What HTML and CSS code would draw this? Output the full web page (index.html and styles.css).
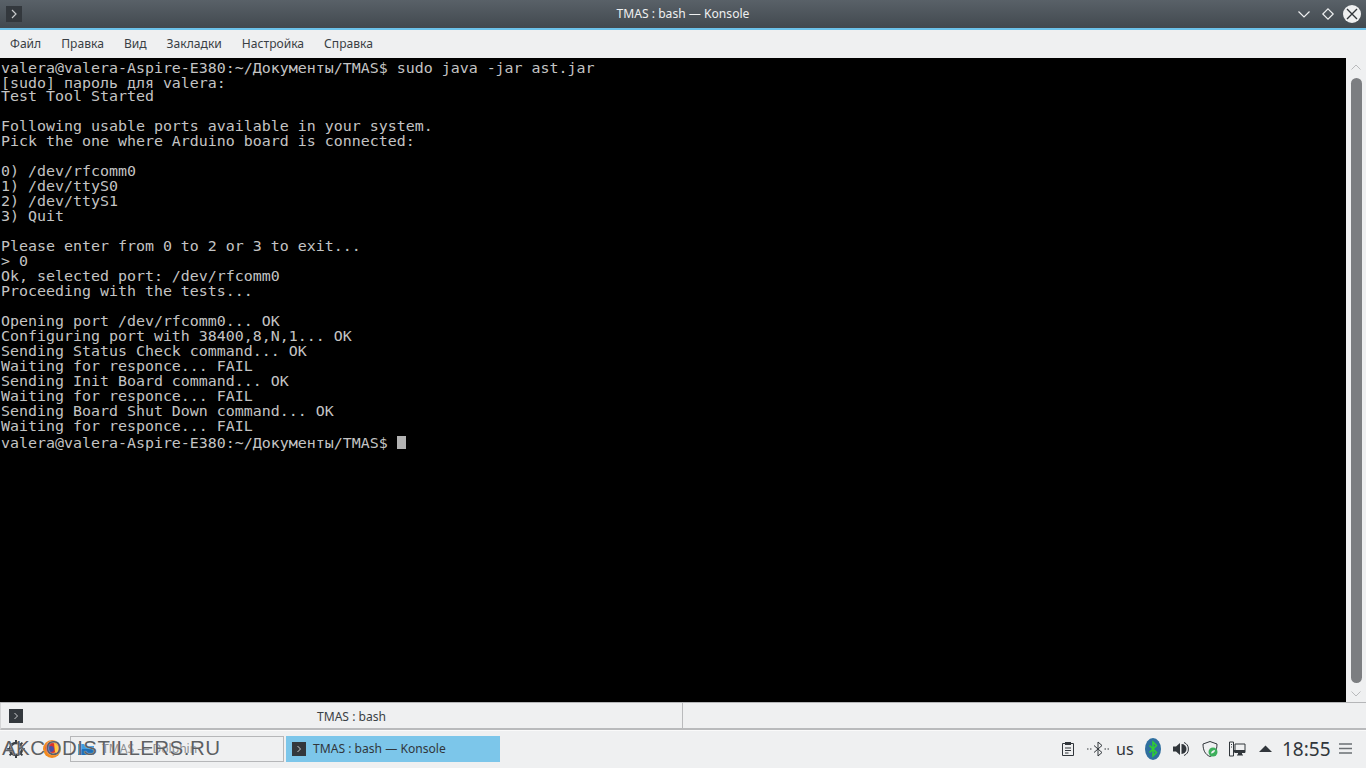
FILE: index.html
```html
<!DOCTYPE html>
<html lang="ru">
<head>
<meta charset="utf-8">
<title>TMAS : bash — Konsole</title>
<link rel="stylesheet" href="styles.css">
</head>
<body>
<div class="screen">
  <header class="titlebar">
    <div class="title-left"><span class="term-icon term-icon-title"><svg viewBox="0 0 16 16" width="16" height="16"><path d="M6 4l4 4-4 4" fill="none" stroke="#c8cacc" stroke-width="1.2"/></svg></span></div>
    <div class="title-text">TMAS : bash — Konsole</div>
    <div class="title-buttons">
      <svg class="wbtn" viewBox="0 0 14 14" width="14" height="14"><path d="M1.5 4.5L7 10l5.500-5.500" fill="none" stroke="#eff0f1" stroke-width="1.200"/></svg>
      <svg class="wbtn" viewBox="0 0 14 14" width="14" height="14"><path d="M7 1.800L12.200 7 7 12.200 1.800 7z" fill="none" stroke="#eff0f1" stroke-width="1.200"/></svg>
      <span class="close-btn"><svg viewBox="0 0 18 18" width="18" height="18"><path d="M4 4l10 10M14 4L4 14" fill="none" stroke="#31363b" stroke-width="1.400"/></svg></span>
    </div>
  </header>
  <nav class="menubar">
    <span class="menu-item">Файл</span>
    <span class="menu-item">Правка</span>
    <span class="menu-item">Вид</span>
    <span class="menu-item">Закладки</span>
    <span class="menu-item">Настройка</span>
    <span class="menu-item">Справка</span>
  </nav>
  <main class="workspace">
    <div class="terminal">
      <div class="line first">valera@valera-Aspire-E380:~/Документы/TMAS$ sudo java -jar ast.jar</div>
      <div class="line second">[sudo] пароль для valera:</div>
      <div class="line">Test Tool Started</div>
      <div class="line"> </div>
      <div class="line">Following usable ports available in your system.</div>
      <div class="line">Pick the one where Arduino board is connected:</div>
      <div class="line"> </div>
      <div class="line">0) /dev/rfcomm0</div>
      <div class="line">1) /dev/ttyS0</div>
      <div class="line">2) /dev/ttyS1</div>
      <div class="line">3) Quit</div>
      <div class="line"> </div>
      <div class="line">Please enter from 0 to 2 or 3 to exit...</div>
      <div class="line">&gt; 0</div>
      <div class="line">Ok, selected port: /dev/rfcomm0</div>
      <div class="line">Proceeding with the tests...</div>
      <div class="line"> </div>
      <div class="line">Opening port /dev/rfcomm0... OK</div>
      <div class="line">Configuring port with 38400,8,N,1... OK</div>
      <div class="line">Sending Status Check command... OK</div>
      <div class="line">Waiting for responce... FAIL</div>
      <div class="line">Sending Init Board command... OK</div>
      <div class="line">Waiting for responce... FAIL</div>
      <div class="line">Sending Board Shut Down command... OK</div>
      <div class="line">Waiting for responce... FAIL</div>
      <div class="line prompt">valera@valera-Aspire-E380:~/Документы/TMAS$ <span class="cursor"></span></div>
    </div>
    <aside class="scrollbar">
      <svg class="arrow" viewBox="0 0 10 6" width="10" height="6"><path d="M.5 5.500L5 1l4.500 4.500" fill="none" stroke="#b9babc" stroke-width="1"/></svg>
      <div class="thumb"></div>
      <svg class="arrow" viewBox="0 0 10 6" width="10" height="6"><path d="M.5.500L5 5l4.500-4.500" fill="none" stroke="#b9babc" stroke-width="1"/></svg>
    </aside>
  </main>
  <div class="tabbar">
    <div class="tab">
      <span class="term-icon term-icon-small"><svg viewBox="0 0 14 14" width="14" height="14"><path d="M5.500 4l3 3-3 3" fill="none" stroke="#c8cacc" stroke-width="1"/></svg></span>
      <span class="tab-label">TMAS : bash</span>
    </div>
  </div>
  <footer class="taskbar">
    <div class="launcher">
      <svg class="gear" viewBox="0 0 20 20" width="20" height="20"><circle cx="10" cy="10" r="6" fill="none" stroke="#3a3f44" stroke-width="2.500"/><path d="M10 1v4M10 15v4M1 10h4M15 10h4M3.600 3.600l3 3M13.400 13.400l3 3M16.400 3.600l-3 3M6.600 13.400l-3 3" stroke="#3a3f44" stroke-width="2"/></svg>
      <svg class="fox" viewBox="0 0 20 20" width="20" height="20"><circle cx="10" cy="10" r="9" fill="#f28a1e"/><circle cx="9" cy="9" r="5.500" fill="#d8342c"/><path d="M12 4a7 7 0 0 1 4 10l-3-1z" fill="#ffc93c"/><circle cx="9" cy="10" r="3" fill="#4a4fa5"/></svg>
    </div>
    <div class="task task-idle">
      <svg class="folder" viewBox="0 0 18 16" width="18" height="16"><path d="M1 3h6l2 2h8v9H1z" fill="#3d9be0"/><path d="M1 14l4-6h12v6z" fill="#1d6fb8"/></svg>
      <span class="task-label">TMAS — Dolphin</span>
    </div>
    <div class="task task-active">
      <span class="term-icon term-icon-small"><svg viewBox="0 0 14 14" width="14" height="14"><path d="M5.500 4l3 3-3 3" fill="none" stroke="#c8cacc" stroke-width="1"/></svg></span>
      <span class="task-label">TMAS : bash — Konsole</span>
    </div>
    <div class="tray">
      <svg class="tray-icon clip" viewBox="0 0 16 16" width="16" height="16"><path d="M2.500 2.500h11v12h-11z" fill="none" stroke="#31363b" stroke-width="1"/><path d="M5 1h6v3H5z" fill="#31363b"/><path d="M5 7h6M5 9.500h6M5 12h3.500" stroke="#31363b"/></svg>
      <svg class="tray-icon bt-dim" viewBox="0 0 24 16" width="24" height="16"><path d="M8 4.500l8 7L12 15V1l4 3.500-8 7" fill="none" stroke="#31363b"/><path d="M1 8h1.500M4 8h1.500M18.500 8H20M21.500 8H23" stroke="#31363b"/></svg>
      <span class="tray-us">us</span>
      <span class="bt-badge"><svg viewBox="0 0 12 18" width="12" height="18"><path d="M2.500 5.500l7 7L6 16V2l3.500 3.500-7 7" fill="none" stroke="#2fd12f" stroke-width="1.500"/></svg></span>
      <svg class="tray-icon speaker" viewBox="0 0 18 16" width="18" height="16"><path d="M1 5.500h3L8 2v12l-4-3.500H1z" fill="#31363b"/><path d="M9.500 3a5 5 0 0 1 0 10" fill="#31363b"/><path d="M12 1.500a7 7 0 0 1 0 13" fill="none" stroke="#31363b"/></svg>
      <svg class="tray-icon shield" viewBox="0 0 18 18" width="18" height="18"><path d="M9 1.500l7 2.500c0 6-2 10.500-7 12.500C4 14.500 2 10 2 4z" fill="none" stroke="#31363b"/><circle cx="12" cy="12" r="4.500" fill="#3daf5c"/><path d="M10 13.500c0-2 2-3.500 4-3.500 0 2-2 3.500-4 3.500" fill="#eff0f1"/></svg>
      <svg class="tray-icon net" viewBox="0 0 18 16" width="18" height="16"><path d="M1.500 1h4v14h-4zM7 3h10v8.500H7z" fill="none" stroke="#31363b"/><path d="M3 3.500h1M3 6h1M9 14h6" stroke="#31363b"/><path d="M10 11.500h4V14h-4zM5.500 11.500H17V9H5.500z" fill="#31363b"/></svg>
      <svg class="tray-icon up" viewBox="0 0 13 7" width="13" height="7"><path d="M0 7l6.500-6.500L13 7z" fill="#31363b"/></svg>
      <span class="clock">18:55</span>
      <svg class="tray-icon burger" viewBox="0 0 13 11" width="13" height="11"><path d="M0 1h13M0 5.500h13M0 10h13" stroke="#6b6f73" stroke-width="1.300"/></svg>
    </div>
    <div class="watermark">AKCODISTILLERS.RU</div>
  </footer>
</div>
</body>
</html>
```
FILE: styles.css
```css
* { box-sizing: border-box; }
html, body { margin: 0; padding: 0; }
body { width: 1366px; height: 768px; overflow: hidden; background: #eff0f1; font-family: "Noto Sans", sans-serif; color: #31363b; }
.screen { width: 1366px; height: 768px; display: flex; flex-direction: column; }

.titlebar { height: 30px; flex: none; display: grid; grid-template-columns: 1fr auto 1fr; align-items: center; padding-bottom: 2px; background: linear-gradient(#596168, #434a50 96%); border-bottom: 2px solid #6cc2ea; color: #eff0f1; font-size: 12.1px; }
.title-left { display: flex; padding-left: 6px; }
.term-icon { display: flex; align-items: center; justify-content: center; background: #33383d; }
.term-icon-title { width: 16px; height: 16px; }
.term-icon-small { width: 14px; height: 14px; flex: none; }
.title-text { line-height: 28px; }
.title-buttons { display: flex; justify-content: flex-end; align-items: center; gap: 10px; padding-right: 5px; }
.wbtn { display: block; }
.close-btn { width: 18px; height: 18px; margin-left: -2px; border-radius: 50%; background: #eff0f1; display: block; }
.close-btn svg { display: block; }

.menubar { height: 28px; flex: none; display: flex; gap: 20px; padding: 0 0 2px 10px; align-items: center; background: #eff0f1; font-size: 12.1px; color: #3a3f44; }

.workspace { height: 644px; flex: none; display: flex; }
.terminal { width: 1346px; height: 644px; background: #000; color: #c4c4c4; font-family: "DejaVu Sans Mono", monospace; font-size: 14.95px; padding: 3px 0 0 1px; }
.line { height: 15px; line-height: 15px; white-space: pre; }
.line.second { height: 13px; }
.line.prompt { margin-top: 2px; }
.cursor { display: inline-block; width: 9px; height: 13px; background: #b2b2b2; vertical-align: -1px; }
.scrollbar { flex: 1; display: flex; flex-direction: column; align-items: center; padding: 6px 0 5px; gap: 8px; background: #eff0f1; }
.arrow { display: block; flex: none; }
.thumb { flex: 1; width: 11px; border-radius: 6px; background: #7c7e81; }

.tabbar { height: 28px; flex: none; border-top: 1px solid #b5b6b8; border-bottom: 2px solid #b9babc; background: #eff0f1; display: flex; }
.tab { width: 683px; margin-bottom: -2px; height: 28px; border-right: 1px solid #b9babc; border-left: 1px solid #d4d5d6; border-bottom: 2px solid #b9babc; border-radius: 0 0 3px 3px; display: flex; align-items: center; padding: 0 0 0 8px; font-size: 12.1px; }
.tab-label { flex: 1; text-align: center; padding-right: 2px; color: #3a3f44; }

.taskbar { position: relative; flex: 1; display: flex; align-items: center; padding-bottom: 2px; background: #eff0f1; border-top: 1px solid #fafafa; }
.launcher { width: 70px; display: flex; align-items: center; gap: 16px; padding-left: 6px; flex: none; }
.gear, .fox { display: block; flex: none; }
.task { width: 214px; height: 26px; display: flex; align-items: center; gap: 7px; font-size: 12.1px; color: #31363b; }
.task-idle { border: 1px solid #b6b7b9; padding-left: 6px; background: #eff0f1; }
.task-active { margin-left: 2px; background: #7cc6ea; padding-left: 6px; }
.task-idle .task-label { color: #8a8d90; }
.tray { margin-left: auto; display: flex; align-items: center; padding-right: 14px; }
.tray-icon { display: block; flex: none; }
.clip { margin-right: 10px; }
.bt-dim { margin-right: 6px; }
.tray-us { font-size: 16px; width: 18px; margin-right: 11px; }
.bt-badge { width: 16px; height: 22px; border-radius: 50%; background: #2f6f9f; display: flex; align-items: center; justify-content: center; margin-right: 11px; }
.bt-badge svg { display: block; }
.speaker { margin-right: 11px; }
.shield { margin-right: 9px; }
.net { margin-right: 13px; }
.up { margin-right: 10px; }
.clock { font-size: 19px; line-height: 26px; width: 48px; color: #31363b; margin-right: 9px; }
.watermark { position: absolute; left: 2px; top: 4px; font-family: "Liberation Sans", sans-serif; font-size: 20.5px; line-height: 26px; letter-spacing: 0.450px; color: #5d6063; white-space: nowrap; text-shadow: 0 0 1px #fff; }
```
